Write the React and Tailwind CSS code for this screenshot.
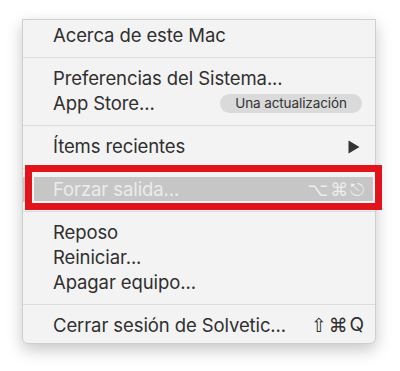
import React from "react";

const font = { fontFamily: 'Inter, "Noto Sans", "DejaVu Sans", sans-serif' };
const sym = { fontFamily: '"DejaVu Sans", sans-serif' };

function Row({ children, right, className = "" }) {
  return (
    <div className={`flex h-[25px] items-center justify-between pl-[30px] pr-[11px] ${className}`}>
      <span>{children}</span>
      {right}
    </div>
  );
}

function Sep() {
  return (
    <div className="flex h-[18px] items-center">
      <div className="h-px w-full bg-[#dcdcdc]" />
    </div>
  );
}

export default function App() {
  return (
    <div className="relative h-[371px] w-[400px] bg-white" style={font}>
      <div className="pl-[22px] pt-[19px]">
        <div className="w-[354px] rounded-b-[6px] border border-[#cfcfcf] bg-[#f3f3f3] pb-[5px] pt-[3px] text-[18.5px] tracking-[-0.1px] text-[#2f2f2f] shadow-[0_6px_16px_rgba(0,0,0,0.22)]">
          <Row>Acerca de este Mac</Row>
          <Sep />
          <Row>Preferencias del Sistema...</Row>
          <Row
            right={
              <span className="mr-[2px] flex h-[19px] w-[142px] items-center justify-center rounded-full bg-[#dadada] text-[13.5px] text-[#333]">
                Una actualización
              </span>
            }
          >
            App Store...
          </Row>
          <Sep />
          <Row
            right={
              <svg width="12" height="14" viewBox="0 0 12 14" className="mr-[4px]">
                <path d="M0.5 0.5 L11.5 7 L0.5 13.5 Z" fill="#333" />
              </svg>
            }
          >
            Ítems recientes
          </Row>
          <Sep />
          <Row
            className="bg-[#c6c6c6] text-[#ececec]"
            right={
              <span className="flex items-center gap-[2px] text-[18px] text-[#ededed]" style={sym}>
                <span>⌥</span>
                <span>⌘</span>
                <span>⎋</span>
              </span>
            }
          >
            Forzar salida...
          </Row>
          <Sep />
          <Row>Reposo</Row>
          <Row>Reiniciar...</Row>
          <Row>Apagar equipo...</Row>
          <Sep />
          <Row
            right={
              <span className="flex items-center gap-[2px] text-[19px] text-[#2f2f2f]">
                <span style={sym}>⇧</span>
                <span style={sym}>⌘</span>
                <span>Q</span>
              </span>
            }
          >
            Cerrar sesión de Solvetic...
          </Row>
        </div>
      </div>
      <div className="absolute left-[25px] top-[165px] h-[45px] w-[357px] border-[7px] border-[#e3131b] shadow-[inset_0_0_0_2px_#f6f6f6]" />
    </div>
  );
}
